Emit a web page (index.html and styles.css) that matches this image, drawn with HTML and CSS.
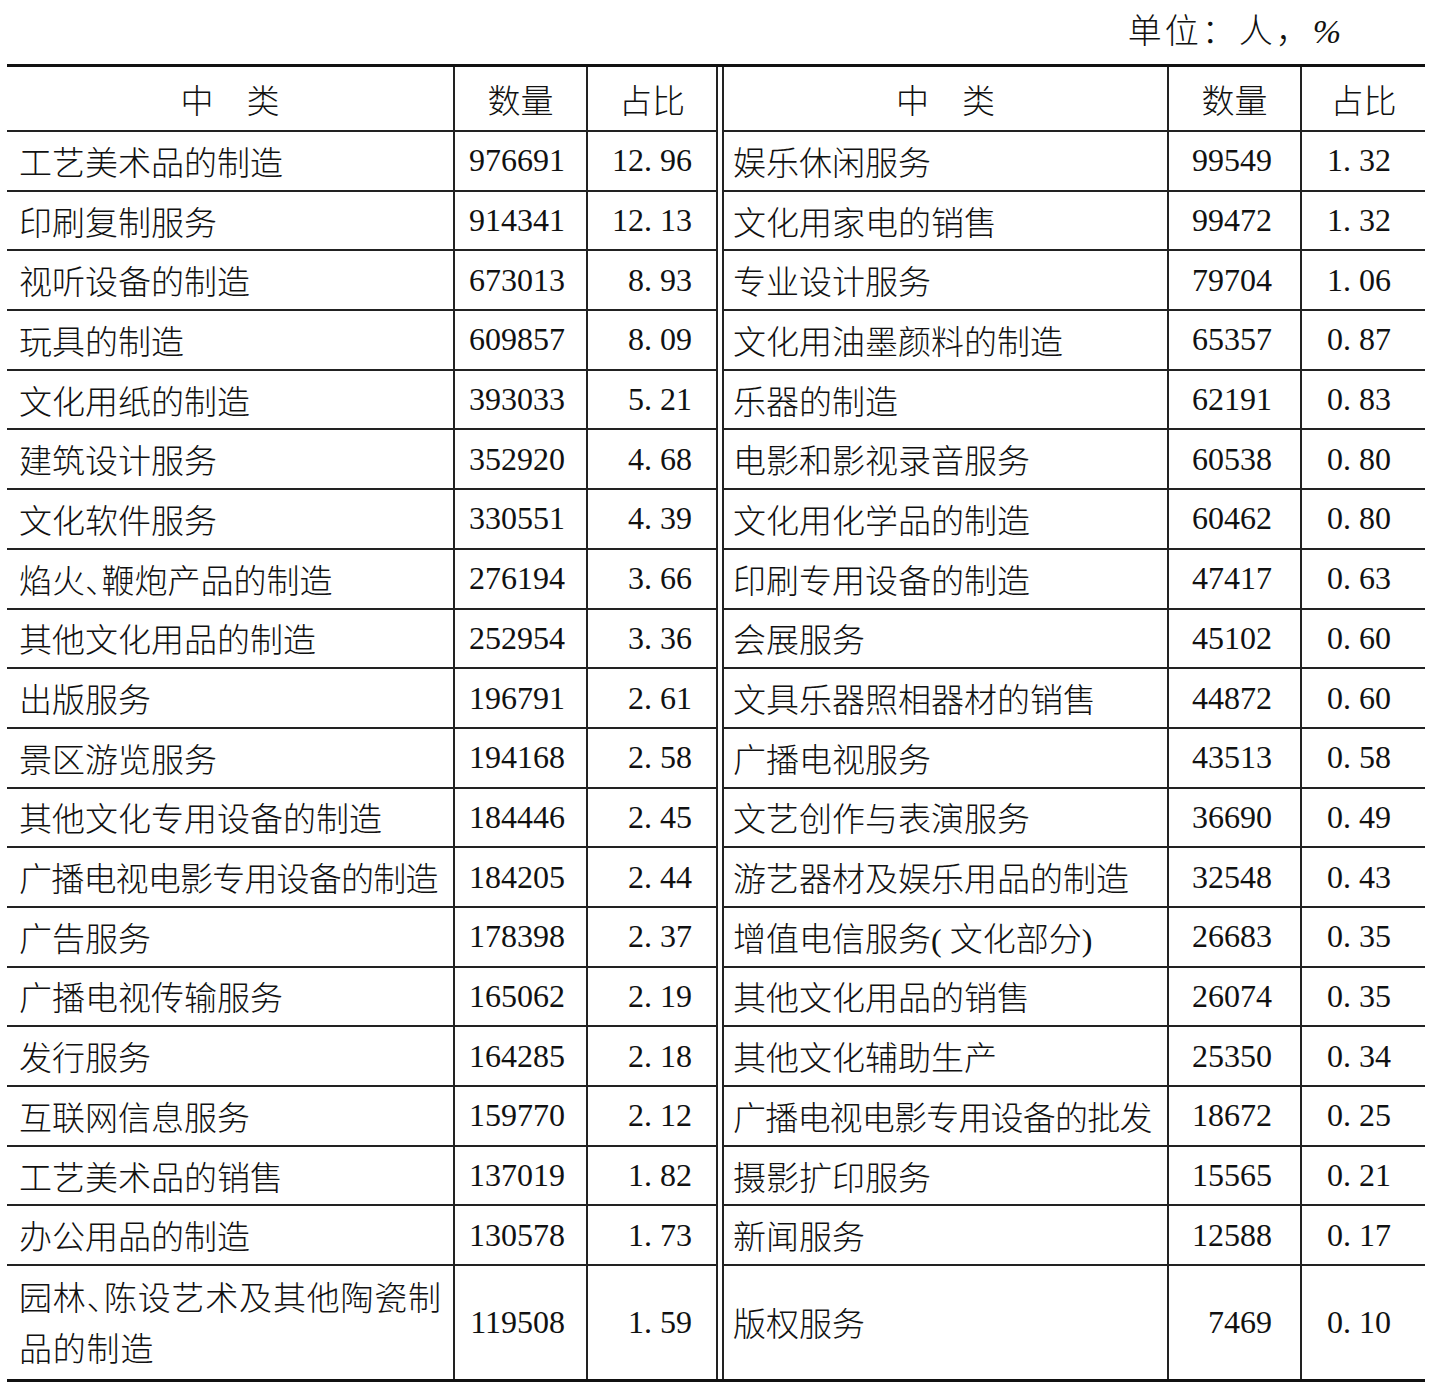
FILE: index.html
```html
<!DOCTYPE html>
<html lang="zh-CN">
<head>
<meta charset="utf-8">
<title>文化产业从业人员中类构成</title>
<link rel="stylesheet" href="styles.css">
</head>
<body>
<div class="page">
  <div class="unit">单位：人，<span class="pc">%</span></div>
  <div class="sheet" role="table">
    <div class="half left">
      <div class="c h">中　类</div><div class="c h">数量</div><div class="c h">占比</div>
      <div class="c n">工艺美术品的制造</div><div class="c q">976691</div><div class="c p">12<span class="dp">.</span>96</div>
      <div class="c n">印刷复制服务</div><div class="c q">914341</div><div class="c p">12<span class="dp">.</span>13</div>
      <div class="c n">视听设备的制造</div><div class="c q">673013</div><div class="c p">8<span class="dp">.</span>93</div>
      <div class="c n">玩具的制造</div><div class="c q">609857</div><div class="c p">8<span class="dp">.</span>09</div>
      <div class="c n">文化用纸的制造</div><div class="c q">393033</div><div class="c p">5<span class="dp">.</span>21</div>
      <div class="c n">建筑设计服务</div><div class="c q">352920</div><div class="c p">4<span class="dp">.</span>68</div>
      <div class="c n">文化软件服务</div><div class="c q">330551</div><div class="c p">4<span class="dp">.</span>39</div>
      <div class="c n"><span>焰火<span class="dun">、</span>鞭炮产品的制造</span></div><div class="c q">276194</div><div class="c p">3<span class="dp">.</span>66</div>
      <div class="c n">其他文化用品的制造</div><div class="c q">252954</div><div class="c p">3<span class="dp">.</span>36</div>
      <div class="c n">出版服务</div><div class="c q">196791</div><div class="c p">2<span class="dp">.</span>61</div>
      <div class="c n">景区游览服务</div><div class="c q">194168</div><div class="c p">2<span class="dp">.</span>58</div>
      <div class="c n">其他文化专用设备的制造</div><div class="c q">184446</div><div class="c p">2<span class="dp">.</span>45</div>
      <div class="c n tight">广播电视电影专用设备的制造</div><div class="c q">184205</div><div class="c p">2<span class="dp">.</span>44</div>
      <div class="c n">广告服务</div><div class="c q">178398</div><div class="c p">2<span class="dp">.</span>37</div>
      <div class="c n">广播电视传输服务</div><div class="c q">165062</div><div class="c p">2<span class="dp">.</span>19</div>
      <div class="c n">发行服务</div><div class="c q">164285</div><div class="c p">2<span class="dp">.</span>18</div>
      <div class="c n">互联网信息服务</div><div class="c q">159770</div><div class="c p">2<span class="dp">.</span>12</div>
      <div class="c n">工艺美术品的销售</div><div class="c q">137019</div><div class="c p">1<span class="dp">.</span>82</div>
      <div class="c n">办公用品的制造</div><div class="c q">130578</div><div class="c p">1<span class="dp">.</span>73</div>
      <div class="c n last two"><span class="ln">园林<span class="dun">、</span>陈设艺术及其他陶瓷制</span><span class="ln">品的制造</span></div><div class="c q last">119508</div><div class="c p last">1<span class="dp">.</span>59</div>
    </div>
    <div class="half right">
      <div class="c h">中　类</div><div class="c h">数量</div><div class="c h">占比</div>
      <div class="c n">娱乐休闲服务</div><div class="c q">99549</div><div class="c p">1<span class="dp">.</span>32</div>
      <div class="c n">文化用家电的销售</div><div class="c q">99472</div><div class="c p">1<span class="dp">.</span>32</div>
      <div class="c n">专业设计服务</div><div class="c q">79704</div><div class="c p">1<span class="dp">.</span>06</div>
      <div class="c n">文化用油墨颜料的制造</div><div class="c q">65357</div><div class="c p">0<span class="dp">.</span>87</div>
      <div class="c n">乐器的制造</div><div class="c q">62191</div><div class="c p">0<span class="dp">.</span>83</div>
      <div class="c n">电影和影视录音服务</div><div class="c q">60538</div><div class="c p">0<span class="dp">.</span>80</div>
      <div class="c n">文化用化学品的制造</div><div class="c q">60462</div><div class="c p">0<span class="dp">.</span>80</div>
      <div class="c n">印刷专用设备的制造</div><div class="c q">47417</div><div class="c p">0<span class="dp">.</span>63</div>
      <div class="c n">会展服务</div><div class="c q">45102</div><div class="c p">0<span class="dp">.</span>60</div>
      <div class="c n">文具乐器照相器材的销售</div><div class="c q">44872</div><div class="c p">0<span class="dp">.</span>60</div>
      <div class="c n">广播电视服务</div><div class="c q">43513</div><div class="c p">0<span class="dp">.</span>58</div>
      <div class="c n">文艺创作与表演服务</div><div class="c q">36690</div><div class="c p">0<span class="dp">.</span>49</div>
      <div class="c n">游艺器材及娱乐用品的制造</div><div class="c q">32548</div><div class="c p">0<span class="dp">.</span>43</div>
      <div class="c n"><span>增值电信服务<span class="par po">(</span>文化部分<span class="par">)</span></span></div><div class="c q">26683</div><div class="c p">0<span class="dp">.</span>35</div>
      <div class="c n">其他文化用品的销售</div><div class="c q">26074</div><div class="c p">0<span class="dp">.</span>35</div>
      <div class="c n">其他文化辅助生产</div><div class="c q">25350</div><div class="c p">0<span class="dp">.</span>34</div>
      <div class="c n tight">广播电视电影专用设备的批发</div><div class="c q">18672</div><div class="c p">0<span class="dp">.</span>25</div>
      <div class="c n">摄影扩印服务</div><div class="c q">15565</div><div class="c p">0<span class="dp">.</span>21</div>
      <div class="c n">新闻服务</div><div class="c q">12588</div><div class="c p">0<span class="dp">.</span>17</div>
      <div class="c n last">版权服务</div><div class="c q last">7469</div><div class="c p last">0<span class="dp">.</span>10</div>
    </div>
  </div>
</div>
</body>
</html>
```

FILE: styles.css
```css
html, body {
  margin: 0;
  padding: 0;
  background: #fff;
}

body {
  color: #111;
  font-family: "Noto Sans CJK SC", "Noto Sans", sans-serif;
  font-weight: 300;
}

.page {
  width: 1431px;
}

.unit {
  height: 64px;
  line-height: 58px;
  font-size: 34px;
  letter-spacing: 3px;
  text-align: right;
  padding-right: 90px;
  box-sizing: border-box;
}

.unit .pc {
  font-family: "Liberation Serif", serif;
  font-style: italic;
  font-size: 34px;
  letter-spacing: 0;
}

.sheet {
  margin-left: 7px;
  width: 1418px;
  border-top: 3px solid #111;
  border-bottom: 3px solid #111;
  display: flex;
  gap: 4px;
}

.half {
  display: grid;
  grid-template-rows: 65px repeat(19, 59.7px) 112.7px;
}

.left {
  width: 711px;
  grid-template-columns: 448px 133px 130px;
}

.right {
  width: 703px;
  box-sizing: border-box;
  border-left: 2px solid #222;
  grid-template-columns: 445px 133px 123px;
}

.c {
  box-sizing: border-box;
  border-bottom: 2px solid #222;
  border-right: 2px solid #222;
  display: flex;
  align-items: center;
  font-size: 33px;
  white-space: nowrap;
}

.right .c:nth-child(3n) {
  border-right: none;
}

.c.last {
  border-bottom: none;
}

.h {
  justify-content: center;
}

.n {
  padding-left: 12px;
}

.right .n {
  padding-left: 9px;
}

.tight {
  letter-spacing: -0.8px;
}

.c.two {
  flex-direction: column;
  align-items: flex-start;
  justify-content: center;
  line-height: 51px;
  letter-spacing: 0.8px;
}

.ln {
  display: block;
}

.q, .p {
  justify-content: flex-end;
  font-family: "Liberation Serif", serif;
  font-weight: 400;
  font-size: 32px;
}

.left .q { padding-right: 21px; }
.left .p { padding-right: 24px; }
.right .q { padding-right: 28px; }
.right .p { padding-right: 34px; }

.dp {
  letter-spacing: 8px;
}

.dun {
  font-feature-settings: "halt" 1;
}

.par {
  font-family: "Liberation Serif", serif;
  font-size: 32px;
}

.po {
  padding-right: 8px;
}
```
